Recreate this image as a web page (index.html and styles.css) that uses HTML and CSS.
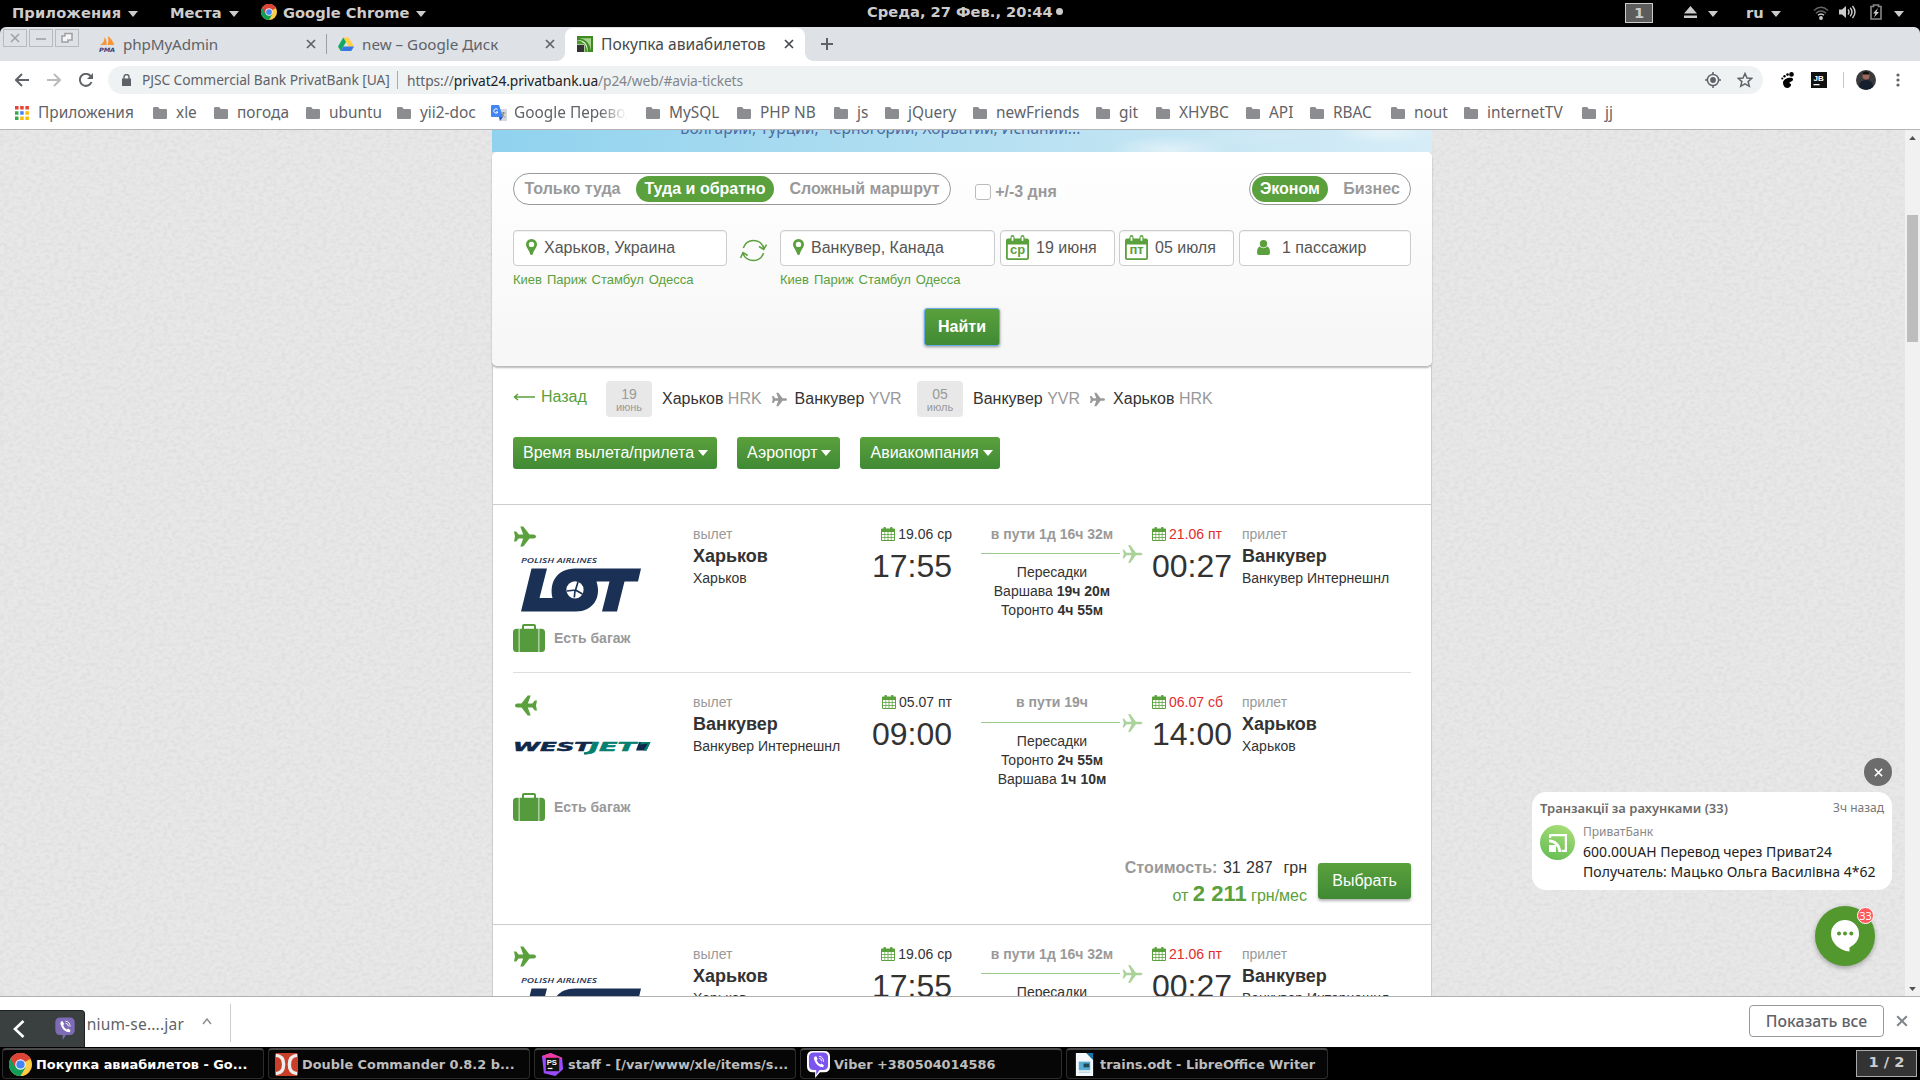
FILE: index.html
```html
<!DOCTYPE html>
<html lang="ru">
<head>
<meta charset="utf-8">
<title>Покупка авиабилетов</title>
<link rel="stylesheet" href="styles.css">
</head>
<body>
<svg class="defs" width="0" height="0">
  <symbol id="plane" viewBox="0 0 22 20"><path d="M0 5h2.2l2.4 3h4.6L6.3 0h3l6.2 8h4.2c1.2 0 2.3 1 2.3 2s-1.1 2-2.3 2h-4.2l-6.2 8h-3l2.9-8H4.6l-2.4 3H0l1-5z"/></symbol>
  <symbol id="plane-thin" viewBox="0 0 22 20"><path d="M0 5h1.4l3 3.6H10L6.2 0h2.2l6.4 8.6h5c1.2 0 2.2.8 2.2 1.4s-1 1.4-2.2 1.4h-5L8.4 20H6.2l3.8-8.6H4.4l-3 3.6H0l1.4-5z"/></symbol>
  <symbol id="caret" viewBox="0 0 10 6"><path d="M0 0h10L5 6z"/></symbol>
  <symbol id="x" viewBox="0 0 10 10"><path d="M1 1l8 8M9 1L1 9" fill="none" stroke="currentColor" stroke-width="1.7"/></symbol>
  <symbol id="folder" viewBox="0 0 14 12"><path d="M1.2 0h4l1.5 2h6.1q1.2 0 1.2 1.2v7.6q0 1.2-1.2 1.2H1.2Q0 12 0 10.8V1.2Q0 0 1.2 0z"/></symbol>
  <symbol id="pin" viewBox="0 0 11 16"><path fill-rule="evenodd" d="M5.5 0A5.4 5.4 0 0 1 11 5.4C11 8.500 7.800 10.500 6.900 15Q6.500 16 5.500 16T4.100 15C3.200 10.500 0 8.500 0 5.400A5.400 5.400 0 0 1 5.500 0zm0 2.700a2.700 2.700 0 1 0 0 5.400 2.700 2.700 0 0 0 0-5.400z"/></symbol>
  <symbol id="cal-day" viewBox="0 0 23 25"><path fill-rule="evenodd" d="M2 3.500h2.500V2a2 2 0 0 1 4 0v1.500h6V2a2 2 0 0 1 4 0v1.500H21a2 2 0 0 1 2 2V23a2 2 0 0 1-2 2H2a2 2 0 0 1-2-2V5.500a2 2 0 0 1 2-2zM1.800 9.500v13.700h19.400V9.500zM5.600 1.800v4h1.800v-4zM15.600 1.800v4h1.800v-4z"/></symbol>
  <symbol id="cal" viewBox="0 0 14 14"><path fill-rule="evenodd" d="M1 1.500h1.500V1a1.200 1.200 0 0 1 2.400 0v.5h4.200V1a1.200 1.200 0 0 1 2.400 0v.5H13a1 1 0 0 1 1 1V13a1 1 0 0 1-1 1H1a1 1 0 0 1-1-1V2.500a1 1 0 0 1 1-1zM1 5v2.200h2.500V5zM4.200 5v2.200h2.400V5zM7.400 5v2.200h2.400V5zM10.500 5v2.200H13V5zM1 8v2h2.500V8zM4.200 8v2h2.400V8zM7.400 8v2h2.400V8zM10.500 8v2H13V8zM1 10.800V13h2.500v-2.200zM4.200 10.800V13h2.400v-2.200zM7.400 10.800V13h2.400v-2.200zM10.500 10.800V13H13v-2.200z"/></symbol>
  <symbol id="case" viewBox="0 0 32 28"><path fill-rule="evenodd" d="M6.500 4.700H9V2a2 2 0 0 1 2-2h10a2 2 0 0 1 2 2v2.700h2.500V28h-19zM11 2v2.700h10V2z"/><path d="M3.500 4.700H5.700V28H3.500A3.500 3.500 0 0 1 0 24.500V8.200a3.500 3.500 0 0 1 3.500-3.500zM28.500 4.700H26.300V28h2.200a3.500 3.500 0 0 0 3.500-3.500V8.200a3.500 3.500 0 0 0-3.500-3.500z"/></symbol>
  <symbol id="chrome" viewBox="0 0 24 24"><circle cx="12" cy="12" r="12" fill="#fc4"/><path d="M12 12L1.600 6A12 12 0 0 1 22.400 6z" fill="#db4437"/><path d="M1.600 6A12 12 0 0 0 12 24l5.200-9L12 12z" fill="#0f9d58"/><path d="M12 6.500h10.700L22.400 6A12 12 0 0 0 1.600 6l5.200 9z" fill="#db4437"/><circle cx="12" cy="12" r="5.500" fill="#f1f1f1"/><circle cx="12" cy="12" r="4.300" fill="#4285f4"/></symbol>
  <symbol id="phone" viewBox="0 0 22 26"><path d="M6 0.500h10Q21.500 .500 21.500 6v8Q21.500 19.500 16 19.500H12L8.500 25V19.500H6Q.5 19.500.500 14V6Q.5.500 6 .500z"/><path d="M6.500 5l2-.5 1.500 3-1 1.500q1 3 4 4.500l1.500-1 2.500 2-1 2q-7 0-10-9z" fill="#fff"/><path d="M11.500 4.500q5 .500 5 6M11.700 6.800q2.800.2 3 3.200" fill="none" stroke="#fff"/></symbol>
  <symbol id="lot" viewBox="0 0 120 56">
    <text class="lot-caption" x="0" y="7" textLength="76" lengthAdjust="spacingAndGlyphs">POLISH AIRLINES</text>
    <g transform="translate(0 12.500)"><path fill="#1a3054" d="M10.500 0H26L18.500 29.500H31.500C28 14 36 0 54 0H120L117 13H103.500L96 43H81L88.500 13H75.500C81 30 71 43 55 43H0z"/><circle cx="54" cy="21.300" r="8.600" fill="#fff"/><path d="M57 13.500L54.500 21.500 61.500 25.500M54.500 21.500L46 22.500M54 22l-.7 7" fill="none" stroke="#1a3054" stroke-width="1.700"/></g>
  </symbol>
  <symbol id="westjet" viewBox="0 0 138 14">
    <text class="westjet-name" x="0" y="9.700" textLength="78" lengthAdjust="spacingAndGlyphs" fill="#10294a" stroke="#10294a">WEST</text>
    <text class="westjet-name" x="76" y="9.700" textLength="47" lengthAdjust="spacingAndGlyphs" fill="#058070" stroke="#058070">JET</text>
    <path d="M71 12.300q6 .5 8-4" fill="none" stroke="#058070" stroke-width="2.200"/>
    <path d="M126 1h11.500l-4 8.500H123z" fill="#10294a"/><path d="M137.500 1l-4 8.500h-3L135 2.500 127 3.500l1-2.500z" fill="#058070"/>
  </symbol>
</svg>

<header class="panel">
  <span class="panel-item apps">Приложения <svg class="caret"><use href="#caret"/></svg></span>
  <span class="panel-item places">Места <svg class="caret"><use href="#caret"/></svg></span>
  <span class="panel-item current"><svg class="i16"><use href="#chrome"/></svg>Google Chrome <svg class="caret"><use href="#caret"/></svg></span>
  <span class="clock">Среда, 27 Фев., 20:44<i></i></span>
  <div class="tray">
    <span class="workspace">1</span>
    <svg class="eject" viewBox="0 0 13 12"><path d="M6.500 0L13 7.500H0zM0 9.500h13v2.500H0z"/></svg>
    <svg class="caret c1"><use href="#caret"/></svg>
    <span class="lang">ru</span>
    <svg class="caret c2"><use href="#caret"/></svg>
    <svg class="wifi" viewBox="0 0 16 14"><path d="M1 4.500Q8-2 15 4.500M3 7.300q5-4.500 10 0" fill="none" stroke="#666" stroke-width="1.500"/><path d="M5 9.300q3-2.600 6 0" fill="none" stroke="#ccc" stroke-width="1.500"/><circle cx="8" cy="12" r="1.900"/></svg>
    <svg class="volume" viewBox="0 0 17 14"><path d="M0 4.500h3L7 1v12L3 9.500H0z"/><path d="M9 4.500q2 2.500 0 5M11.200 2.700q3.500 4.300 0 8.600M13.500 1q5 6 0 12" fill="none" stroke="#ccc" stroke-width="1.400"/></svg>
    <svg class="battery" viewBox="0 0 12 16"><path d="M1 2.500h2.500V1h5v1.500H11V15H1z" fill="none" stroke="#888" stroke-width="1.600"/><path d="M8 4L3 9.500h2.500L4 13.500 9 8H6.500z"/></svg>
    <svg class="caret c3"><use href="#caret"/></svg>
  </div>
</header>

<div class="tabstrip">
  <div class="winbtns">
    <span><svg viewBox="0 0 12 12"><path d="M2 2l8 8M10 2l-8 8"/></svg></span>
    <span><svg viewBox="0 0 12 12"><path d="M1 7h10"/></svg></span>
    <span><svg viewBox="0 0 12 12"><rect x="1" y="4" width="6" height="6"/><path d="M4 4V1.500h7V8H7.500"/></svg></span>
  </div>
  <div class="tab t1"><svg class="i16" viewBox="0 0 16 16"><path d="M1 9Q6 6 5.500 1 8 4 7.500 9zM8.500 9Q10 5 9 0q5 4 6 9z" fill="#f79433"/><text class="pma-tag" x="0" y="16" textLength="16" lengthAdjust="spacingAndGlyphs">PMA</text></svg><span>phpMyAdmin</span><svg class="tab-x"><use href="#x"/></svg></div>
  <div class="tab t2"><svg class="i16" viewBox="0 0 16 16"><path d="M5.300 1.500h5.400L16 10.500h-5.400z" fill="#ffcf48"/><path d="M5.300 1.500L8 6 2.700 15 0 10.500z" fill="#11a861"/><path d="M5.400 10.500H16L13.300 15H2.700z" fill="#3777e3"/></svg><span>new – Google Диск</span><svg class="tab-x"><use href="#x"/></svg></div>
  <div class="tab t3"><svg class="i16" viewBox="0 0 16 16"><path d="M0 0h16v16h-5.500Q11.500 4 0 4z" fill="#3f8a22"/><path d="M2.500 2.200H14V15q-1-11-11.500-12.800z" fill="#a6d58b"/><path d="M0 4Q9.500 5 10.500 16H7.500V8.500H0z" fill="#4d9a2c"/><path d="M0 9h7v7H0z" fill="#333"/></svg><span>Покупка авиабилетов</span><svg class="tab-x"><use href="#x"/></svg></div>
  <svg class="plus" viewBox="0 0 12 12"><path d="M6 0v12M0 6h12" stroke="#5f6368" stroke-width="2"/></svg>
</div>

<div class="toolbar">
  <svg class="nav" viewBox="0 0 14 14"><path d="M14 7H1.500M7 1L1 7l6 6" fill="none" stroke="#5f6368" stroke-width="2"/></svg>
  <svg class="nav off" viewBox="0 0 14 14"><path d="M0 7h12.500M7 1l6 6-6 6" fill="none" stroke="#b9bbbd" stroke-width="2"/></svg>
  <svg class="nav" viewBox="0 0 14 14"><path d="M12.500 9A6 6 0 1 1 11.500 3" fill="none" stroke="#5f6368" stroke-width="2"/><path d="M14 0v6H8z" fill="#5f6368"/></svg>
  <div class="omnibox">
    <svg class="lock" viewBox="0 0 9 12"><path d="M0 4.500h9V12H0z"/><path d="M2 5V3a2.500 2.500 0 0 1 5 0v2" fill="none" stroke="#5f6368" stroke-width="1.400"/></svg>
    <span class="owner">PJSC Commercial Bank PrivatBank [UA]</span>
    <span class="url">https://<b>privat24.privatbank.ua</b><em>/p24/web/#avia-tickets</em></span>
    <svg class="target" viewBox="0 0 16 16"><circle cx="8" cy="8" r="5.600" fill="none" stroke="#5f6368" stroke-width="1.500"/><circle cx="8" cy="8" r="2.900"/><path d="M8 0v3M8 13v3M0 8h3M13 8h3" stroke="#5f6368" stroke-width="1.500"/></svg>
    <svg class="star" viewBox="0 0 16 16"><path d="M8 1.500l2 4.500 4.800.4-3.700 3.200 1.200 4.700L8 11.800l-4.300 2.500 1.200-4.700L1.200 6.400 6 6z" fill="none" stroke="#5f6368" stroke-width="1.500"/></svg>
  </div>
  <svg class="gnome" viewBox="0 0 13 16"><ellipse cx="10.500" cy="2.400" rx="2.300" ry="2.300"/><circle cx="6.500" cy="2.600" r="1.300"/><circle cx="3.500" cy="4.300" r="1.200"/><circle cx="1.300" cy="6.500" r="1.100"/><path d="M2 10.500C2 6.500 11 4 12 7c.7 2.500-4 2.700-3.500 4 .3 1 1.500.3 1.600 1.500C10.200 14 8.500 16 6 16c-2.500 0-4-3-4-5.500z"/></svg>
  <svg class="jb" viewBox="0 0 16 16"><path d="M0 0h16v16H0z"/><text class="jb-name" x="2.500" y="9">JB</text><path d="M2.500 12h6v1.300h-6z" fill="#fff"/></svg>
  <i class="sep"></i>
  <svg class="avatar" viewBox="0 0 20 20"><circle cx="10" cy="10" r="10" fill="#3a3a3c"/><circle cx="10" cy="6" r="3.500" fill="#a0685a"/><path d="M3 17q0-7 7-7t7 7a10 10 0 0 1-14 0z" fill="#15202f"/><path d="M7 2.500q3-2 6 0v2H7z" fill="#111"/></svg>
  <svg class="dots" viewBox="0 0 4 14"><circle cx="2" cy="2" r="1.600"/><circle cx="2" cy="7" r="1.600"/><circle cx="2" cy="12" r="1.600"/></svg>
</div>

<nav class="bookmarks">
  <a><svg class="grid-i" viewBox="0 0 14 14"><path d="M0 0h3.500v3.500H0zM5.200 0h3.500v3.500H5.200zM10.400 0h3.500v3.500h-3.500z" fill="#ea4335"/><path d="M0 5.200h3.500v3.500H0zM0 10.400h3.500v3.500H0z" fill="#34a853"/><path d="M5.200 5.200h3.500v3.500H5.200z" fill="#4285f4"/><path d="M10.400 5.200h3.500v3.500h-3.500zM5.200 10.400h3.500v3.500H5.200zM10.400 10.400h3.500v3.500h-3.500z" fill="#fbbc05"/></svg>Приложения</a>
  <a><svg><use href="#folder"/></svg>xle</a>
  <a><svg><use href="#folder"/></svg>погода</a>
  <a><svg><use href="#folder"/></svg>ubuntu</a>
  <a><svg><use href="#folder"/></svg>yii2-doc</a>
  <a class="fade"><svg class="i16" viewBox="0 0 16 16"><path d="M6 4h10v12H9z" fill="#d5d7da"/><path d="M1 0h7l4 12H1q-1 0-1-1V1q0-1 1-1z" fill="#4285f4"/><path d="M8 12h4l-3 4z" fill="#2a5bc0"/><path d="M6.700 4.500A2.200 2.200 0 1 0 7 7H5" fill="none" stroke="#fff"/><path d="M10.500 8h4M12.500 7v1q-.5 3-2 4M11.500 9.500l2.500 3" fill="none" stroke="#777" stroke-width=".8"/></svg>Google Перевод</a>
  <a><svg><use href="#folder"/></svg>MySQL</a>
  <a><svg><use href="#folder"/></svg>PHP NB</a>
  <a><svg><use href="#folder"/></svg>js</a>
  <a><svg><use href="#folder"/></svg>jQuery</a>
  <a><svg><use href="#folder"/></svg>newFriends</a>
  <a><svg><use href="#folder"/></svg>git</a>
  <a><svg><use href="#folder"/></svg>ХНУВС</a>
  <a><svg><use href="#folder"/></svg>API</a>
  <a><svg><use href="#folder"/></svg>RBAC</a>
  <a><svg><use href="#folder"/></svg>nout</a>
  <a><svg><use href="#folder"/></svg>internetTV</a>
  <a><svg><use href="#folder"/></svg>jj</a>
</nav>

<div class="viewport">
  <main class="page">
    <div class="hero"><p>Болгарии, Турции, Черногории, Хорватии, Испании...</p></div>
    <section class="search">
      <div class="row options">
        <div class="pill"><span>Только туда</span><span class="on">Туда и обратно</span><span>Сложный маршрут</span></div>
        <label class="flex-days"><i></i>+/-3 дня</label>
        <div class="pill cabin"><span class="on">Эконом</span><span>Бизнес</span></div>
      </div>
      <div class="row fields">
        <div class="place"><div class="input"><svg class="pin"><use href="#pin"/></svg>Харьков, Украина</div><p>Киев Париж Стамбул Одесса</p></div>
        <svg class="swap" viewBox="0 0 27 22"><path d="M3.300 8.500Q6 1 13.500 1q8 0 10.500 8M2.800 14Q6 21 13.500 21q7.500 0 10-7.500M19 7l4.700 3L26.500 5M.500 18.500L3 13l4.700 3" fill="none" stroke="#5aa03c" stroke-width="1.500"/></svg>
        <div class="place to"><div class="input"><svg class="pin"><use href="#pin"/></svg>Ванкувер, Канада</div><p>Киев Париж Стамбул Одесса</p></div>
        <div class="input date"><span class="day"><svg><use href="#cal-day"/></svg><b>ср</b></span>19 июня</div>
        <div class="input date"><span class="day"><svg><use href="#cal-day"/></svg><b>пт</b></span>05 июля</div>
        <div class="input people"><svg viewBox="0 0 13 15"><circle cx="6.500" cy="3.700" r="3.700"/><path d="M2.500 6.500Q6.500 10 10.500 6.500 13 8 13 12.500q0 2.500-2 2.500H2q-2 0-2-2.500Q0 8 2.500 6.500z"/></svg>1 пассажир</div>
      </div>
      <button class="btn find">Найти</button>
    </section>

    <section class="results">
      <div class="route">
        <a class="back"><svg viewBox="0 0 22 8"><path d="M22 4H1.500M5 1L1.500 4 5 7" fill="none" stroke="#5aa03c" stroke-width="1.500"/></svg>Назад</a>
        <span class="datebox">19<small>июнь</small></span>
        <span class="leg">Харьков <i>HRK</i><svg><use href="#plane"/></svg>Ванкувер <i>YVR</i></span>
        <span class="datebox two">05<small>июль</small></span>
        <span class="leg">Ванкувер <i>YVR</i><svg><use href="#plane"/></svg>Харьков <i>HRK</i></span>
      </div>
      <div class="filters">
        <button class="btn">Время вылета/прилета<svg><use href="#caret"/></svg></button>
        <button class="btn">Аэропорт<svg><use href="#caret"/></svg></button>
        <button class="btn">Авиакомпания<svg><use href="#caret"/></svg></button>
      </div>

      <article class="offer">
        <div class="flight">
          <div class="airline"><svg class="dir"><use href="#plane"/></svg><div class="logo"><svg class="lot"><use href="#lot"/></svg></div><div class="bag"><svg><use href="#case"/></svg>Есть багаж</div></div>
          <div class="city"><span>вылет</span><b>Харьков</b><p>Харьков</p></div>
          <div class="when dep"><span><svg><use href="#cal"/></svg>19.06 ср</span><time>17:55</time></div>
          <div class="transit"><b class="total">в пути 1д 16ч 32м</b><div class="arrow"><i></i><svg><use href="#plane-thin"/></svg></div><p>Пересадки</p><p>Варшава <b>19ч 20м</b></p><p>Торонто <b>4ч 55м</b></p></div>
          <div class="when arr"><span><svg><use href="#cal"/></svg><em>21.06 пт</em></span><time>00:27</time></div>
          <div class="city"><span>прилет</span><b>Ванкувер</b><p>Ванкувер Интернешнл</p></div>
        </div>
        <div class="flight return">
          <div class="airline"><svg class="dir"><use href="#plane"/></svg><div class="logo"><svg class="westjet"><use href="#westjet"/></svg></div><div class="bag"><svg><use href="#case"/></svg>Есть багаж</div></div>
          <div class="city"><span>вылет</span><b>Ванкувер</b><p>Ванкувер Интернешнл</p></div>
          <div class="when dep"><span><svg><use href="#cal"/></svg>05.07 пт</span><time>09:00</time></div>
          <div class="transit"><b class="total">в пути 19ч</b><div class="arrow"><i></i><svg><use href="#plane-thin"/></svg></div><p>Пересадки</p><p>Торонто <b>2ч 55м</b></p><p>Варшава <b>1ч 10м</b></p></div>
          <div class="when arr"><span><svg><use href="#cal"/></svg><em>06.07 сб</em></span><time>14:00</time></div>
          <div class="city"><span>прилет</span><b>Харьков</b><p>Харьков</p></div>
        </div>
        <div class="price">
          <div class="sums"><p class="cost"><b>Стоимость:</b> 31 287 &nbsp;грн</p><p class="monthly">от <b>2 211</b> грн/мес</p></div>
          <button class="btn choose">Выбрать</button>
        </div>
      </article>

      <article class="offer">
        <div class="flight">
          <div class="airline"><svg class="dir"><use href="#plane"/></svg><div class="logo"><svg class="lot"><use href="#lot"/></svg></div></div>
          <div class="city"><span>вылет</span><b>Харьков</b><p>Харьков</p></div>
          <div class="when dep"><span><svg><use href="#cal"/></svg>19.06 ср</span><time>17:55</time></div>
          <div class="transit"><b class="total">в пути 1д 16ч 32м</b><div class="arrow"><i></i><svg><use href="#plane-thin"/></svg></div><p>Пересадки</p></div>
          <div class="when arr"><span><svg><use href="#cal"/></svg><em>21.06 пт</em></span><time>00:27</time></div>
          <div class="city"><span>прилет</span><b>Ванкувер</b><p>Ванкувер Интернешнл</p></div>
        </div>
      </article>
    </section>
  </main>
  <div class="scrollbar"><svg><use href="#caret"/></svg><i></i><svg><use href="#caret"/></svg></div>

  <aside class="widget">
    <button class="dismiss"><svg><use href="#x"/></svg></button>
    <div class="message">
      <div class="msg-head"><b>Транзакції за рахунками (33)</b><span>3ч назад</span></div>
      <div class="msg-body">
        <span class="bank"><svg viewBox="0 0 18 18"><path fill-rule="evenodd" d="M0 0h18v18h-5.500v-2.200h3.300V2.200H2.200V4H0z" fill="#fff"/><path d="M0 5.500q11 .5 12.300 12.500H9.500Q8 8.500 0 8.300zM0 11h7v7H0z" fill="#fff"/></svg></span>
        <div><span>ПриватБанк</span><p>600.00UAH Перевод через Приват24</p><p>Получатель: Мацько Ольга Василівна 4*62</p></div>
      </div>
    </div>
    <div class="chat"><svg viewBox="0 0 28 32"><path d="M14 0a14 14 0 0 1 14 14c0 6-4 10.500-9.500 13.500V31.500C9 31 0 23 0 14A14 14 0 0 1 14 0z" fill="#fff"/><g fill="#53982f"><circle cx="8" cy="13.500" r="2"/><circle cx="14" cy="13.500" r="2"/><circle cx="20.300" cy="13.500" r="2"/></g></svg><span class="badge">33</span></div>
  </aside>
</div>

<div class="downloads">
  <div class="file"><span>nium-se....jar</span><svg viewBox="0 0 10 7"><path d="M1 6l4-5 4 5" fill="none" stroke="#8a8d91" stroke-width="1.500"/></svg></div>
  <button class="showall">Показать все</button>
  <svg class="dl-x"><use href="#x"/></svg>
  <div class="traypop"><svg class="chev" viewBox="0 0 12 18"><path d="M10.500 1L2 9l8.500 8" fill="none" stroke="#fff" stroke-width="2.600"/></svg><svg class="vb"><use href="#phone"/></svg></div>
</div>

<footer class="taskbar">
  <div class="task active"><svg><use href="#chrome"/></svg>Покупка авиабилетов - Go...</div>
  <div class="task"><svg viewBox="0 0 24 24"><rect width="24" height="24" rx="2" fill="#c8402a"/><path d="M1 2.500Q9 3 9 12T1 21.500M23 2.500Q15 3 15 12t8 9.500" fill="none" stroke="#eee" stroke-width="3.500"/></svg>Double Commander 0.8.2 b...</div>
  <div class="task"><svg viewBox="0 0 24 24"><path d="M1 3L10 0l12 5 1 12-8 7L3 21z" fill="#9a4dff"/><path d="M1 3L10 0l12 5-10 6z" fill="#f03aa0"/><rect x="5" y="5" width="14" height="14" fill="#111"/><text class="ps-name" x="6" y="13">PS</text><path d="M7 15.500h5v1.300H7z" fill="#fff"/></svg>staff - [/var/www/xle/items/s...</div>
  <div class="task"><svg class="viber" viewBox="0 0 24 28"><path d="M6 0h12q6 0 6 6v10q0 6-6 6h-4.500L8.500 28V22H6q-6 0-6-6V6q0-6 6-6z" fill="#fff"/><use href="#phone" x="1.500" y="1" width="21" height="25"/></svg>Viber +380504014586</div>
  <div class="task"><svg viewBox="0 0 24 24"><path d="M3 0h11l7 7v17H3z" fill="#f4f8fa"/><path d="M14 0h7v7z" fill="#1877a8"/><path d="M6 9h12v9H6z" fill="#58aed0"/><path d="M11 11h6v4h-6z" fill="#1f4a58"/><path d="M6 20h12" stroke="#9ec8da"/></svg>trains.odt - LibreOffice Writer</div>
  <span class="pager">1 / 2</span>
</footer>
</body>
</html>
```
FILE: styles.css
```css
* { box-sizing: border-box; }
html, body { margin: 0; height: 100%; overflow: hidden; }
body { width: 1920px; height: 1080px; display: flex; flex-direction: column; background: #fff; font-family: "Noto Sans", sans-serif; }
p { margin: 0; }
i, em { font-style: normal; }
svg { display: block; flex: none; fill: currentColor; }
button { font-family: inherit; margin: 0; border: 0; }
.defs { display: none; }
.i16 { width: 16px; height: 16px; }

/* desktop panel */
.panel { flex: none; height: 27px; background: #000; color: #ccc; display: flex; align-items: center; font: bold 14.67px "DejaVu Sans", sans-serif; position: relative; white-space: nowrap; padding-bottom: 3px; }
.panel-item { display: flex; align-items: center; }
.caret { width: 10px; height: 6px; margin-top: 3px; margin-left: 7px; }
.apps { width: 158px; padding-left: 12px; letter-spacing: .1px; }
.places { width: 103px; padding-left: 12px; }
.current .i16 { margin-right: 6px; }
.clock { position: absolute; left: 867px; top: 3px; display: flex; align-items: center; gap: 3px; }
.clock i { width: 7px; height: 7px; border-radius: 50%; background: #ccc; }
.tray { margin-left: auto; display: flex; align-items: center; padding-right: 16px; }
.tray .caret { margin-left: 0; }
.workspace { width: 28px; height: 20px; border: 1px solid #ccc; background: #5c5c5c; display: grid; place-items: center; font-weight: bold; margin: 2px 31px 0 0; line-height: 16px; }
.eject { width: 13px; height: 12px; margin-right: 11px; }
.lang { width: 18px; margin: 0 7px 0 28px; }
.wifi { width: 16px; height: 14px; margin: 2px 10px 0 32px; }
.volume { width: 17px; height: 14px; margin-right: 14px; }
.battery { width: 12px; height: 16px; margin-right: 12px; }

/* tabs */
.tabstrip { flex: none; height: 34px; background: #dee1e6; display: flex; align-items: stretch; border-radius: 6px 6px 0 0; color: #5f6368; font-size: 15.2px; box-shadow: 0 -6px 0 #000; }
.winbtns { display: flex; gap: 2px; padding: 2px 0 0 3px; width: 89px; }
.winbtns span { width: 24px; height: 18px; border: 1px solid #b8babd; display: grid; place-items: center; }
.winbtns svg { width: 12px; height: 12px; fill: #f5f5f5; stroke: #9d9fa2; stroke-width: 1.500; }
.tab { display: flex; align-items: center; white-space: nowrap; padding-left: 10px; }
.tab span { flex: 1; padding: 0 0 1px 8px; }
.tab-x { width: 10px; height: 10px; }
.t1 { width: 238px; padding-right: 11px; position: relative; letter-spacing: -.1px; }
.t1::after { content: ""; position: absolute; right: 0; top: 7px; width: 1px; height: 20px; background: #9b9ea3; }
.t2 { width: 238px; padding-right: 10px; padding-left: 11px; }
.t3 { width: 240px; background: #fff; color: #45494d; border-radius: 8px 8px 0 0; padding: 0 11px 1px 12px; position: relative; margin-top: 1px; font-size: 15.600px; }
.t3::before, .t3::after { content: ""; position: absolute; bottom: 0; width: 8px; height: 8px; background: radial-gradient(circle at 0 0, transparent 7.500px, #fff 8px); left: -8px; }
.t3::after { left: auto; right: -8px; transform: scaleX(-1); }
.plus { width: 12px; height: 12px; margin: 11px 0 0 16px; }
.pma-tag { font: italic bold 6px "DejaVu Sans", sans-serif; fill: #3b3d78; }

/* address bar */
.toolbar { flex: none; height: 38px; display: flex; align-items: center; padding-left: 15px; font-size: 13.8px; color: #5f6368; }
.nav { width: 14px; height: 14px; margin-right: 18px; }
.omnibox { width: 1655px; height: 28px; border-radius: 14px; background: #eff2f3; display: flex; align-items: center; padding-left: 14px; margin-left: -3px; }
.lock { width: 9px; height: 12px; margin-right: 11px; }
.owner { width: 256px; border-right: 1px solid #a9acaf; line-height: 18px; margin-right: 9px; letter-spacing: -.08px; white-space: nowrap; }
.url { letter-spacing: -.1px; }
.url b { font-weight: 400; color: #222; }
.url em { color: #80868b; letter-spacing: -.15px; }
.target { width: 16px; height: 16px; margin-left: auto; margin-right: 16px; }
.star { width: 16px; height: 16px; margin-right: 10px; }
.gnome { width: 13px; height: 16px; margin-left: 18px; color: #000; }
.jb { width: 16px; height: 16px; margin-left: 17px; color: #111; }
.jb-name { font: bold 8px "Liberation Sans", sans-serif; fill: #fff; }
.sep { width: 1px; height: 16px; background: #c5c7c9; margin-left: 16px; }
.avatar { width: 20px; height: 20px; margin-left: 12px; }
.dots { width: 4px; height: 14px; margin-left: 20px; }

/* bookmarks */
.bookmarks { flex: none; height: 31px; padding: 0 0 3px 15px; border-bottom: 1px solid #b6b4b6; display: grid; grid-template-columns: 138px 61px 92px 91px 94px 155px 91px 97px 51px 88px 123px 60px 90px 64px 81px 73px 118px 60px; color: #5f6368; font-size: 15.4px; }
.bookmarks a { display: flex; align-items: center; gap: 9px; white-space: nowrap; }
.bookmarks svg { width: 14px; height: 12px; color: #8b8d90; }
.bookmarks .grid-i { height: 14px; }
.bookmarks .i16 { width: 16px; height: 16px; }
.bookmarks .fade { gap: 7px; width: 137px; overflow: hidden; -webkit-mask-image: linear-gradient(90deg, #000 108px, transparent 136px); mask-image: linear-gradient(90deg, #000 108px, transparent 136px); }

/* viewport */
.viewport { flex: none; height: 866px; display: flex; position: relative; overflow: hidden; font-family: "Liberation Sans", sans-serif; color: #333;
  background: #e8e8e8 url("data:image/svg+xml,%3Csvg xmlns='http://www.w3.org/2000/svg' width='300' height='300'%3E%3Cfilter id='n' x='0' y='0' width='100%25' height='100%25'%3E%3CfeTurbulence type='fractalNoise' baseFrequency='.22 .3' numOctaves='3' stitchTiles='stitch'/%3E%3CfeColorMatrix values='0 0 0 0 .5 0 0 0 0 .5 0 0 0 0 .5 1.2 0 0 0 -.45'/%3E%3C/filter%3E%3Crect width='300' height='300' filter='url(%23n)' opacity='.4'/%3E%3C/svg%3E"); }
.page { width: 940px; margin-left: 492px; }
.hero { height: 22px; overflow: hidden; background: radial-gradient(ellipse 60px 14px at 72% 90%, #e0f1f8, transparent), radial-gradient(ellipse 80px 12px at 83% 30%, #cfe9f5, transparent), radial-gradient(ellipse 50px 12px at 95% 10%, #e6f3f9, transparent), linear-gradient(90deg, #90d2ee, #b0def1 45%, #c9e7f4 80%, #d6edf7); }
.hero p { margin: -10px 0 0 188px; font: 15.5px/16px "Noto Sans", sans-serif; color: #4f6ba0; white-space: nowrap; }

/* search form */
.search { height: 214px; background: linear-gradient(#fff, #f6f6f6); border-radius: 5px; box-shadow: 0 2px 2px rgba(0,0,0,.28); padding: 21px 21px 0; position: relative; font-size: 16px; }
.row { display: flex; }
.pill { height: 32px; border: 1px solid #999; border-radius: 16px; background: #fff; display: flex; padding: 2px; gap: 7px; font-weight: bold; color: #999; line-height: 25px; white-space: nowrap; }
.pill span { padding: 0 8.500px; height: 26px; }
.pill .on { background: #5aa03c; color: #fff; border-radius: 13px; }
.flex-days { display: flex; align-items: center; gap: 4px; margin: 5px 0 0 24px; font-weight: bold; color: #999; }
.flex-days i { width: 16px; height: 16px; border: 1px solid #bbb; border-radius: 3px; background: #fff; }
.cabin { margin-left: auto; }
.cabin span { padding: 0 8.200px; }
.fields { margin-top: 25px; align-items: flex-start; }
.input { height: 36px; border: 1px solid #ccc; border-radius: 4px; background: #fff; box-shadow: inset 0 1px 1px rgba(0,0,0,.06); display: flex; align-items: center; padding: 0 0 0 12px; color: #555; white-space: nowrap; }
.place { width: 214px; }
.place.to { width: 215px; margin-right: 5px; }
.place p { font-size: 13px; color: #5aa03c; line-height: 16px; margin-top: 6px; word-spacing: 1.300px; }
.pin { width: 11px; height: 16px; color: #5aa03c; margin: -2px 7px 0 0; }
.swap { width: 27px; height: 23px; margin: 9px 13px 0; }
.date { width: 115px; padding-left: 5px; margin-right: 4px; }
.date + .people { margin-left: 1px; }
.day { position: relative; color: #5aa03c; margin: -1px 7px 0 0; }
.day svg { width: 23px; height: 25px; }
.day b { position: absolute; left: 0; right: 0; top: 7px; text-align: center; font-size: 13px; line-height: 15px; }
.people { width: 172px; padding-left: 17px; }
.people svg { width: 13px; height: 15px; color: #5aa03c; margin: -2px 12px 0 0; }
.btn { display: flex; align-items: center; color: #fff; font-size: 16px; border-radius: 3px; background: linear-gradient(#5aa03c, #408a35); white-space: nowrap; }
.find { width: 76px; height: 38px; justify-content: center; font-weight: bold; margin: 20px auto 0 411px; border: 1px solid #6aaae8; box-shadow: 0 1px 3px rgba(0,0,0,.4); padding: 0 0 1px; }

/* results */
.results { background: #fff; border: solid #ccc; border-width: 0 1px; height: 640px; }
.route { display: flex; height: 71px; padding: 15px 0 0 20px; align-items: flex-start; font-size: 16px; }
.back { width: 93px; display: flex; align-items: center; gap: 6px; color: #5aa03c; line-height: 32px; }
.back svg { width: 22px; height: 8px; }
.datebox { width: 46px; height: 36px; background: #e8e8e8; border-radius: 4px; color: #999; font-size: 14px; text-align: center; line-height: 15px; padding-top: 6px; }
.datebox small { display: block; font-size: 11px; line-height: 11px; }
.leg { width: 265px; padding-left: 10px; display: flex; align-items: center; line-height: 36px; white-space: pre; }
.leg i { color: #999; }
.leg svg { width: 15px; height: 15px; color: #999; margin: 1px 8px 0 10px; }
.filters { display: flex; gap: 20px; padding: 0 0 35px 20px; }
.filters .btn { height: 32px; padding: 0 9px 1px 10px; }
.filters .btn:nth-child(3) { width: 140px; }
.filters svg { width: 10px; height: 6px; margin-left: 4px; }

.offer { border-top: 1px solid #ccc; padding: 0 20px; height: 420px; font-size: 14px; line-height: 20px; }
.flight { display: grid; grid-template-columns: 180px 150px 109px 200px 90px auto; height: 167px; padding-top: 19px; white-space: nowrap; }
.transit { margin-left: 29px; width: 162px; }
.airline { padding-top: 2px; }
.dir { width: 22px; height: 21px; color: #5aa03c; margin-left: 1px; }
.logo { height: 76px; padding-top: 9px; }
.lot { width: 120px; height: 56px; margin-left: 8px; }
.lot-caption { font: italic 600 7.500px "Open Sans", sans-serif; fill: #1a3054; }
.westjet { width: 138px; height: 14px; margin-top: 16px; }
.westjet-name { font: italic bold 12.500px "DejaVu Sans", sans-serif; stroke-width: .5px; }
.bag { display: flex; align-items: center; gap: 9px; font-weight: bold; color: #999; line-height: 30px; }
.bag svg { width: 32px; height: 28px; color: #559b3d; }
.city span { color: #999; display: block; }
.city b { display: block; font-size: 18px; line-height: 22px; margin: 1px 0; }
.when span { display: flex; align-items: center; gap: 3px; }
.when svg { width: 14px; height: 14px; color: #5aa03c; }
.when em { color: #e02c2c; }
.when time { display: block; font-size: 32px; line-height: 36px; margin-top: 4px; }
.dep { justify-self: end; text-align: right; }
.dep span { justify-content: flex-end; }
.total { display: block; width: 142px; text-align: center; color: #999; }
.arrow { display: flex; align-items: center; gap: 2px; height: 18px; margin-bottom: 1px; padding-top: 1px; }
.arrow i { width: 139px; height: 1px; background: #9dcb8e; }
.arrow svg { width: 21px; height: 18px; color: #a9d39b; }
.transit p { width: 142px; text-align: center; line-height: 19px; }
.return { border-top: 1px solid #ddd; height: 168px; }
.return .dir { transform: scaleX(-1); margin-left: 2px; margin-top: 1px; }
.return .arrow { margin-top: 1px; }
.return .logo { height: 76px; }
.price { display: flex; justify-content: flex-end; height: 84px; padding-top: 17px; gap: 11px; }
.sums { text-align: right; font-size: 16px; white-space: nowrap; line-height: 21px; }
.cost { word-spacing: .9px; }
.cost b { color: #999; letter-spacing: .1px; }
.monthly { color: #5aa03c; line-height: 32px; }
.monthly b { font-size: 22px; }
.choose { width: 93px; height: 36px; justify-content: center; padding: 0; margin-top: 6px; box-shadow: 0 2px 3px rgba(0,0,0,.3); }

.scrollbar { width: 15px; height: 866px; margin-left: auto; background: #f1f1f1; display: flex; flex-direction: column; align-items: center; color: #505050; padding: 6px 0 5px; }
.scrollbar svg { width: 7px; height: 4px; }
.scrollbar svg:first-child { transform: scaleY(-1); }
.scrollbar i { width: 11px; height: 127px; background: #bdbdbd; margin: 75px 0 auto; }

/* notification overlay */
.widget { position: absolute; left: 1532px; top: 628px; width: 360px; display: flex; flex-direction: column; align-items: flex-end; font-family: "Noto Sans", sans-serif; }
.dismiss { width: 28px; height: 28px; border-radius: 50%; background: #6c6c6c; color: #fff; display: grid; place-items: center; padding: 0; }
.dismiss svg { width: 9px; height: 9px; }
.message { width: 360px; height: 98px; margin-top: 6px; background: #fff; border-radius: 14px; padding: 6px 8px 0; }
.msg-head { display: flex; justify-content: space-between; font-size: 12px; line-height: 20px; color: #777; }
.msg-head b { font-size: 13px; font-weight: 600; color: #6b6b6b; }
.msg-body { display: flex; gap: 8px; font-size: 14px; color: #212121; margin-top: 5px; white-space: nowrap; }
.msg-body span { font-size: 12px; color: #888; }
.msg-body div > span { display: block; line-height: 18px; }
.msg-body p { line-height: 21px; height: 20px; letter-spacing: .05px; }
.msg-body p + p { height: 21px; }
.msg-body .bank { width: 35px; height: 35px; border-radius: 50%; background: linear-gradient(200deg, #aee07c, #5fbb50); display: grid; place-items: center; margin-top: 2px; }
.bank svg { width: 18px; height: 18px; }
.chat { width: 60px; height: 60px; border-radius: 50%; background: #53982f; margin: 16px 17px 0 0; position: relative; display: grid; place-items: center; box-shadow: 0 2px 5px rgba(0,0,0,.3); }
.chat svg { width: 28px; height: 32px; }
.badge { position: absolute; left: 42px; top: 1px; width: 17px; height: 17px; border-radius: 50%; background: #ff5a5f; border: 1px solid #fff; color: #fff; font-size: 11px; line-height: 15px; text-align: center; }

/* download shelf */
.downloads { flex: none; height: 51px; border-top: 1px solid #b0b0b0; display: flex; align-items: center; position: relative; color: #5f6368; font-size: 15.5px; }
.file { width: 231px; height: 38px; border-right: 1px solid #ccc; display: flex; align-items: center; justify-content: flex-end; padding: 2px 18px 0 0; gap: 18px; margin-top: 2px; letter-spacing: .2px; }
.file svg { width: 10px; height: 7px; margin-top: -6px; }
.showall { margin: 0 0 2px auto; width: 135px; height: 32px; border: 1px solid #999; border-radius: 4px; background: #fff; color: #5f6368; font-size: 15.800px; font-weight: 500; padding: 0 0 1px; }
.dl-x { width: 12px; height: 12px; margin: 0 12px 2px 12px; color: #80868b; }
.traypop { position: absolute; left: 0; bottom: 0; width: 85px; height: 37px; background: #3a3f40; border: 1px solid #1d2021; border-width: 1px 1px 0 0; border-radius: 0 4px 0 0; display: flex; align-items: center; padding-left: 13px; }
.chev { width: 12px; height: 18px; }
.vb { width: 22px; height: 24px; margin-left: 29px; color: #7d6bb5; }

/* window list */
.taskbar { flex: none; height: 33px; background: #000; display: flex; align-items: center; gap: 4px; padding-left: 2px; color: #bdbdbd; font: bold 12.900px "DejaVu Sans", sans-serif; }
.task { width: 262px; height: 31px; border: 1px solid #2c2c2c; border-top: 2px solid #4a4a4a; border-radius: 4px; background: #060606; display: flex; align-items: center; gap: 4px; padding-left: 6px; white-space: nowrap; }
.task svg { width: 23px; height: 23px; }
.task .viber { height: 27px; color: #7c55f0; }
.active { color: #fff; }
.ps-name { font: bold 8px "Liberation Sans", sans-serif; fill: #fff; }
.pager { margin: 0 3px 0 auto; width: 61px; height: 27px; border: 1px solid #aaa; background: #333; color: #ccc; font-size: 14.67px; display: grid; place-items: center; line-height: 22px; padding-bottom: 3px; }
```
